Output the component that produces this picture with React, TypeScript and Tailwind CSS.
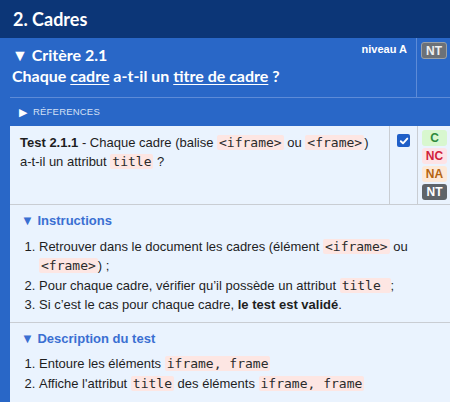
import React from "react";

const Code = ({ children }: { children: React.ReactNode }) => (
  <code className="font-['DejaVu_Sans_Mono',monospace] text-[13px] bg-[#fde6e3] text-[#2b2b2b] px-[2px] rounded-[2px]">
    {children}
  </code>
);

export default function App() {
  return (
    <div className="w-[450px] h-[402px] overflow-hidden bg-white font-['Liberation_Sans',Arial,sans-serif]">
      <div className="h-[38px] bg-[#0c3677] pl-[13px] flex items-center text-white font-['Lato',sans-serif] font-bold text-[18px]">
        2. Cadres
      </div>
      <div className="bg-[#2967c7] pl-[10px] h-[364px]">
        <div className="flex border-b border-[#5d8bd7] h-[60px]">
          <div className="flex-1 relative pl-[2px] pt-[7px] text-white font-['Lato',sans-serif] font-bold">
            <div className="absolute right-[9px] top-[3px] font-['Liberation_Sans',Arial,sans-serif] text-[11px]">niveau A</div>
            <div className="text-[16px] leading-[20px]">▼ Critère 2.1</div>
            <div className="text-[16px] leading-[22px]">
              Chaque <span className="underline underline-offset-2">cadre</span> a-t-il un{" "}
              <span className="underline underline-offset-2">titre de cadre</span> ?
            </div>
          </div>
          <div className="w-[34px] border-l border-[#5d8bd7] pt-[4px] pl-[4px]">
            <div className="w-[26px] h-[17px] rounded-[3px] bg-[#6c7178] border border-[#9aa0a6] text-[#eef0f2] text-[12px] font-bold flex items-center justify-center">
              NT
            </div>
          </div>
        </div>
        <div className="h-[28px] flex items-center pl-[9px] text-[#d4e0f5]">
          <span className="text-white text-[11px] mr-[6px]">▶</span>
          <span className="text-[9.5px] tracking-[0.2px]">RÉFERENCES</span>
        </div>
        <div className="bg-[#eaf3fe] flex border-b border-[#c9cdd3] text-[13px] text-[#1e1e1e]">
          <div className="flex-1 pl-[10px] pr-[14px] pt-[7px] leading-[19px]">
            <b>Test 2.1.1</b> - Chaque cadre (balise <Code>&lt;iframe&gt;</Code> ou <Code>&lt;frame&gt;</Code>) a-t-il un attribut{" "}
            <Code>title</Code> ?
          </div>
          <div className="w-[28px] border-l border-[#c9cdd3] flex justify-center pt-[8px]">
            <div className="w-[13px] h-[13px] rounded-[2px] bg-[#1f5fc8] flex items-center justify-center">
              <svg width="10" height="10" viewBox="0 0 10 10">
                <path d="M1.8 5.2 L4 7.3 L8.3 2.6" stroke="white" strokeWidth="1.9" fill="none" strokeLinecap="round" strokeLinejoin="round" />
              </svg>
            </div>
          </div>
          <div className="w-[33px] border-l border-[#c9cdd3] pt-[4px] pb-[4px] pl-[4px] flex flex-col gap-[2px] text-[12px] font-bold">
            <div className="w-[25px] h-[16px] rounded-[3px] bg-[#d8f7cf] text-[#2f8a3c] flex items-center justify-center">C</div>
            <div className="w-[25px] h-[16px] rounded-[3px] bg-[#fde3e6] text-[#d1213b] flex items-center justify-center">NC</div>
            <div className="w-[25px] h-[16px] rounded-[3px] bg-[#fde9d7] text-[#b5640f] flex items-center justify-center">NA</div>
            <div className="w-[25px] h-[16px] rounded-[3px] bg-[#5f6469] text-white flex items-center justify-center">NT</div>
          </div>
        </div>
        <div className="bg-[#eaf3fe] border-b border-[#c9cdd3] pl-[11px] pt-[8px] pb-[8px] text-[13px] text-[#1e1e1e]">
          <div className="text-[13px] font-bold text-[#3a6fd2] leading-[16px]">▼ Instructions</div>
          <ol className="list-decimal list-outside pl-[18px] mt-[8px] leading-[19.3px]">
            <li>
              Retrouver dans le document les cadres (élément <Code>&lt;iframe&gt;</Code> ou <Code>&lt;frame&gt;</Code>) ;
            </li>
            <li>
              Pour chaque cadre, vérifier qu’il possède un attribut <Code>title </Code>;
            </li>
            <li>
              Si c’est le cas pour chaque cadre, <b>le test est validé</b>.
            </li>
          </ol>
        </div>
        <div className="bg-[#eaf3fe] pl-[11px] pt-[8px] pb-[10px] text-[13px] text-[#1e1e1e] h-[80px]">
          <div className="text-[13px] font-bold text-[#3a6fd2] leading-[16px]">▼ Description du test</div>
          <ol className="list-decimal list-outside pl-[18px] mt-[7px] leading-[20px]">
            <li>
              Entoure les éléments <Code>iframe, frame</Code>
            </li>
            <li>
              Affiche l'attribut <Code>title</Code> des éléments <Code>iframe, frame</Code>
            </li>
          </ol>
        </div>
      </div>
    </div>
  );
}
